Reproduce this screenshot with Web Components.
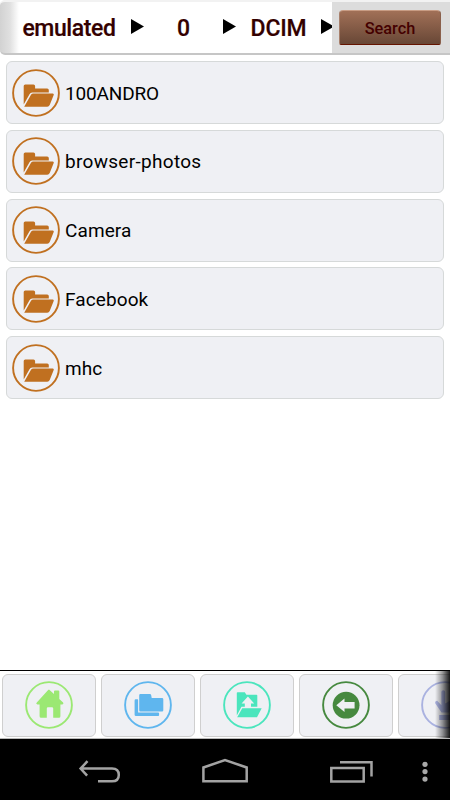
<!DOCTYPE html>
<html lang="en">
<head>
<meta charset="utf-8">
<meta name="viewport" content="width=device-width, initial-scale=1">
<title>Files</title>
<style>
  body {
    margin: 0;
    background: #fff;
    font-family: Roboto, sans-serif;
  }
</style>
</head>
<body>
<file-app></file-app>

<script>
// Icons that sit in the middle of a 48x48 ring
const ICONS = {
  folder: `
    <path d="M11.7 35.5V17.1q0-1.6 1.6-1.6h8.2q1.6 0 1.6 1.6v2.3h12q1.7 0 1.7 1.7v2.4H20.2q-1.8 0-2.7 1.7z"/>
    <path d="M12.2 37.7 19 25.8q.8-1.3 2.4-1.3h19.3q1.6 0 1 1.6l-4 9.8q-.7 1.8-2.5 1.8z"/>`,
  home: `
    <path d="M24 8.6 29 13V10.6q0-1 1-1h3.3q1 0 1 1v7.3l3.8 3.7q1 1.5-.8 1.8h-1.9V35.2q0 1.5-1.5 1.5h-5.7V27.4q0-1.2-1.2-1.2h-4q-1.2 0-1.2 1.2v9.3h-5.7q-1.5 0-1.5-1.5V23.4h-2.1q-2-.3-.7-1.8L22.7 9.6q1.1-1 1.3-1z"/>`,
  folders: `
    <path d="M11.8 18.2h1.7q.6 0 .6 1v12.4h20q1 0 1 1v1.4q0 1-1 1H11.9q-1.3 0-1.3-1.3V19.5q0-1.3 1.2-1.3z"/>
    <path d="M16.4 13h9.4q1.2 0 1.4 1.2l.5 2.9h10.4q1.2 0 1.2 1.2v10.9q0 1.2-1.2 1.2H16.4q-1.2 0-1.2-1.2v-15q0-1.2 1.2-1.2z"/>`,
  upload: `
    <path d="M13.8 34.5V12q0-.8.8-.8h7.2l1.6 2.5h10.1q.8 0 .8.8v11.3H18.5z"/>
    <path d="M19.2 27.2h19.5L34 36.2H14.2z"/>
    <path fill="#eff0f4" d="m24.9 15.4 6.3 7h-3.2v4h-6.2v-4h-3.2z"/>`,
  back: `
    <circle cx="24.1" cy="24.2" r="13.4"/>
    <path fill="#eff0f4" d="m14.3 24.3 8.2-6.8v3.6h10.1v6.3H22.5V31z"/>`,
  download: `
    <path d="M20.4 11q0-1.8 1.9-1.8T24.2 11v11.5l6-3.5q2-.4 2.6 1.6L28 31.5h-7.5l-6.3-9.3q-.4-2.2 2-2.4l4.2 4.4z"/>
    <path d="M18.2 34h14v5h-14z"/>`
};

class RingIcon extends HTMLElement {
  constructor() {
    super();
    this.attachShadow({ mode: 'open' });
  }

  connectedCallback() {
    this.shadowRoot.innerHTML = `
      <style>
        :host {
          display: block;
          width: 48px;
          height: 48px;
          flex: none;
        }

        svg {
          display: block;
          fill: currentColor;
        }
      </style>
      <svg width="48" height="48" viewBox="0 0 48 48">
        <circle cx="24" cy="24" r="22.9" fill="none" stroke="currentColor" stroke-width="1.9"/>
        ${ICONS[this.getAttribute('name')]}
      </svg>
    `;
  }
}

class PathCrumb extends HTMLElement {
  constructor() {
    super();
    const template = document.createElement('template');
    template.innerHTML = `
      <style>
        :host {
          display: flex;
          align-items: center;
          flex: none;
          color: #330000;
          font-size: 23px;
          font-weight: 500;
          line-height: 28px;
        }

        .name {
          flex: 1;
          text-align: center;
          -webkit-text-stroke: 0.2px #330000;
          white-space: nowrap;
        }

        svg {
          flex: none;
          margin-bottom: 4px;
        }
      </style>
      <span class="name"><slot></slot></span>
      <svg width="13" height="15" viewBox="0 0 13 15"><path d="M0 0 13 7.5 0 15z" fill="#000"/></svg>
    `;
    this.attachShadow({ mode: 'open' }).appendChild(template.content.cloneNode(true));
  }
}

class PathBar extends HTMLElement {
  constructor() {
    super();
    const template = document.createElement('template');
    template.innerHTML = `
      <style>
        :host {
          display: flex;
          box-sizing: border-box;
          height: 55px;
          border-top: 2px solid #f2f2f2;
          border-bottom: 2px solid #c6c6c6;
          border-radius: 5px 0 0 5px;
          background: linear-gradient(90deg, #d2d2d2, #e0e0e0 10px, #fff 19px);
        }

        .crumbs {
          display: flex;
          align-items: center;
          width: 332px;
          box-sizing: border-box;
          padding: 2px 0 0 7px;
          overflow: hidden;
        }

        .emulated {
          width: 137px;
          letter-spacing: -0.4px;
        }

        .zero {
          width: 92px;
        }

        .dcim {
          width: 98px;
          letter-spacing: -0.2px;
        }

        .search {
          flex: 1;
          display: flex;
          align-items: center;
          justify-content: center;
          background: #dcdcdc;
        }

        button {
          width: 102px;
          height: 35px;
          margin: 0 2px 0 0;
          padding: 0;
          border: 1px solid;
          border-color: #c89c84 #8a604c #651400 #a8806c;
          border-radius: 4px 4px 2px 2px;
          background: linear-gradient(#a17057, #684736);
          color: #440000;
          font: 500 16.3px/35px Roboto, sans-serif;
        }
      </style>
      <div class="crumbs">
        <path-crumb class="emulated">emulated</path-crumb>
        <path-crumb class="zero">0</path-crumb>
        <path-crumb class="dcim">DCIM</path-crumb>
      </div>
      <div class="search"><button>Search</button></div>
    `;
    this.attachShadow({ mode: 'open' }).appendChild(template.content.cloneNode(true));
  }
}

class FolderRow extends HTMLElement {
  constructor() {
    super();
    const template = document.createElement('template');
    template.innerHTML = `
      <style>
        :host {
          display: flex;
          align-items: center;
          gap: 5px;
          box-sizing: border-box;
          height: 63px;
          padding-left: 5px;
          border: 1px solid #d6d9d9;
          border-radius: 6px;
          background: #eff0f4;
          color: #000;
          font-size: 19px;
          letter-spacing: var(--tracking, 0.1px);
        }

        ring-icon {
          color: #c07020;
        }

        span {
          padding-top: 1px;
        }
      </style>
      <ring-icon name="folder"></ring-icon>
      <span><slot></slot></span>
    `;
    this.attachShadow({ mode: 'open' }).appendChild(template.content.cloneNode(true));
  }
}

class ToolButton extends HTMLElement {
  constructor() {
    super();
    const template = document.createElement('template');
    template.innerHTML = `
      <style>
        :host {
          display: flex;
          align-items: center;
          justify-content: center;
          flex: none;
          box-sizing: border-box;
          width: 94px;
          height: 63px;
          padding-bottom: 1px;
          border: 1px solid #cfcfcf;
          border-radius: 6px;
          background: #eff0f4;
        }
      </style>
      <slot></slot>
    `;
    this.attachShadow({ mode: 'open' }).appendChild(template.content.cloneNode(true));
  }
}

class ToolStrip extends HTMLElement {
  constructor() {
    super();
    const template = document.createElement('template');
    template.innerHTML = `
      <style>
        :host {
          display: flex;
          gap: 4.8px;
          position: relative;
          box-sizing: border-box;
          height: 69px;
          padding: 2.5px 0 0 2.4px;
          border-top: 1px solid #000;
          border-bottom: 1px solid #b8b8b8;
          background: #fff;
          overflow: hidden;
        }

        :host::after {
          content: '';
          position: absolute;
          top: 0;
          right: 0;
          bottom: 0;
          width: 15px;
          background: linear-gradient(90deg, rgba(0, 0, 0, 0), rgba(0, 0, 0, 0.4) 50%, rgba(0, 0, 0, 0.9));
        }
      </style>
      <slot></slot>
    `;
    this.attachShadow({ mode: 'open' }).appendChild(template.content.cloneNode(true));
  }
}

class NavBar extends HTMLElement {
  constructor() {
    super();
    const template = document.createElement('template');
    template.innerHTML = `
      <style>
        :host {
          display: block;
          height: 61px;
          background: #000;
        }

        .keys {
          display: flex;
          padding: 18px 0 0 78px;
        }

        svg {
          flex: none;
          fill: none;
          stroke: #a3a3a3;
          stroke-width: 2.5;
        }

        .home { margin-left: 80px; }
        .recent { margin-left: 81px; }
        .more { margin-left: 49px; fill: #a8a8a8; stroke: none; }
      </style>
      <div class="keys">
        <svg width="43" height="28" viewBox="0 0 43 28">
          <path d="M2 11.5h32q6.8 0 6.8 6.4 0 6.4-6.8 6.4H20M9.5 4.2l-6.9 7.4 6.5 7"/>
        </svg>
        <svg class="home" width="48" height="28" viewBox="0 0 48 28">
          <path d="M2.4 10.5 24 3l21.7 7.5v13.8H2.4z"/>
        </svg>
        <svg class="recent" width="43" height="28" viewBox="0 0 43 28">
          <path d="M1.3 11h32.4v13.4H1.3zM10 5.2h31.5v14.3"/>
        </svg>
        <svg class="more" width="6" height="28" viewBox="0 0 6 28">
          <circle cx="3" cy="7.3" r="2.6"/>
          <circle cx="3" cy="14.6" r="2.6"/>
          <circle cx="3" cy="22.1" r="2.6"/>
        </svg>
      </div>
    `;
    this.attachShadow({ mode: 'open' }).appendChild(template.content.cloneNode(true));
  }
}

class FileApp extends HTMLElement {
  constructor() {
    super();
    const template = document.createElement('template');
    template.innerHTML = `
      <style>
        :host {
          display: flex;
          flex-direction: column;
          height: 800px;
          overflow: hidden;
        }

        .list {
          flex: 1;
          display: flex;
          flex-direction: column;
          gap: 5.75px;
          padding: 6px 6px 0;
        }

        .caps { --tracking: -0.15px; }
        .wide { --tracking: 0.3px; }

        .green { color: #9be873; }
        .blue { color: #5fb6ee; }
        .mint { color: #4be5bd; }
        .dark { color: #46893f; }
        .lilac { color: #aab2e0; }
      </style>
      <path-bar></path-bar>
      <div class="list">
        <folder-row class="caps">100ANDRO</folder-row>
        <folder-row class="wide">browser-photos</folder-row>
        <folder-row>Camera</folder-row>
        <folder-row>Facebook</folder-row>
        <folder-row>mhc</folder-row>
      </div>
      <tool-strip>
        <tool-button><ring-icon class="green" name="home"></ring-icon></tool-button>
        <tool-button><ring-icon class="blue" name="folders"></ring-icon></tool-button>
        <tool-button><ring-icon class="mint" name="upload"></ring-icon></tool-button>
        <tool-button><ring-icon class="dark" name="back"></ring-icon></tool-button>
        <tool-button><ring-icon class="lilac" name="download"></ring-icon></tool-button>
      </tool-strip>
      <nav-bar></nav-bar>
    `;
    this.attachShadow({ mode: 'open' }).appendChild(template.content.cloneNode(true));
  }
}

customElements.define('ring-icon', RingIcon);
customElements.define('path-crumb', PathCrumb);
customElements.define('path-bar', PathBar);
customElements.define('folder-row', FolderRow);
customElements.define('tool-button', ToolButton);
customElements.define('tool-strip', ToolStrip);
customElements.define('nav-bar', NavBar);
customElements.define('file-app', FileApp);
</script>
</body>
</html>
